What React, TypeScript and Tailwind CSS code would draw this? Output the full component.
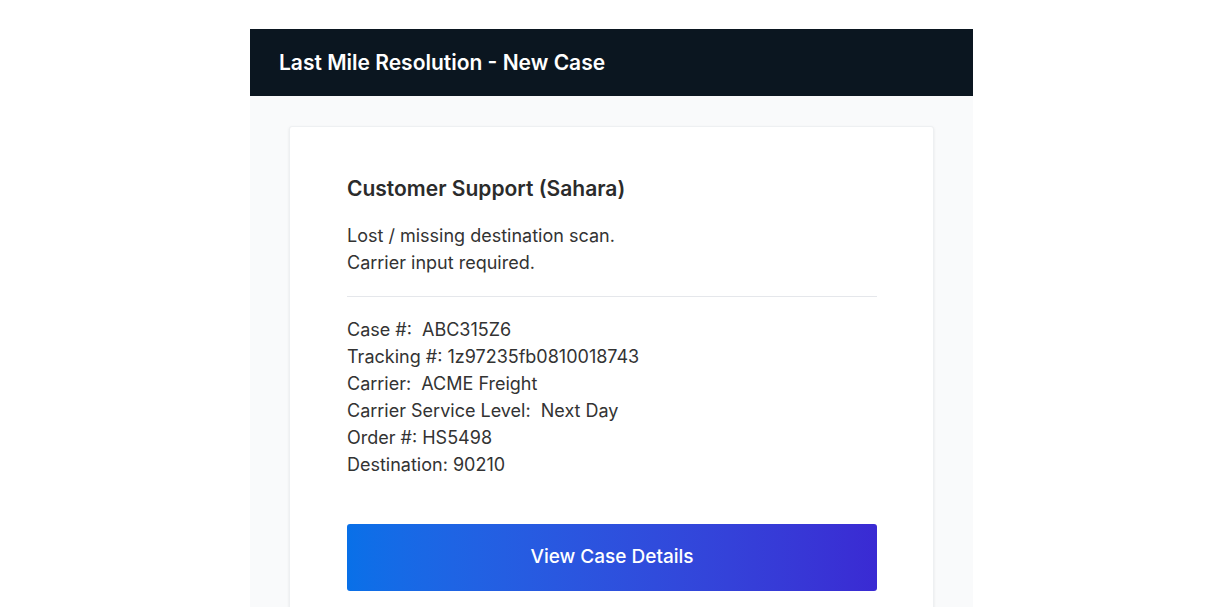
export default function App() {
  const details = [
    'Case #:\u00a0 ABC315Z6',
    'Tracking #: 1z97235fb0810018743',
    'Carrier:\u00a0 ACME Freight',
    'Carrier Service Level:\u00a0 Next Day',
    'Order #: HS5498',
    'Destination: 90210',
  ];

  return (
    <div className="min-h-screen bg-white pt-[29px]" style={{ fontFamily: 'Inter, "Noto Sans", sans-serif' }}>
      <div className="w-[723px] ml-[250px]">
        {/* Header */}
        <div className="h-[67px] bg-[#0b1620] flex items-center px-[29px]">
          <h1 className="text-[21px] font-semibold text-white">
            Last Mile Resolution - New Case
          </h1>
        </div>

        {/* Body */}
        <div className="bg-[#f9fafb] px-[39px] pt-[30px] pb-10">
          <div className="bg-white rounded-[3px] shadow-[0_1px_3px_rgba(0,0,0,0.08)] border border-[#eef0f2] pl-[57px] pr-[56px] pt-[48px] pb-10 text-[#333333]">
            <h2 className="text-[21px] font-semibold leading-[28px] text-[#2b2b2b]">
              Customer Support (Sahara)
            </h2>
            <p className="mt-[19px] text-[18px] leading-[27px]">
              Lost / missing destination scan.
              <br />
              Carrier input required.
            </p>
            <div className="mt-[20px] h-px bg-[#e5e7eb]" />
            <div className="mt-[19px] text-[18px] leading-[27px]">
              {details.map((line) => (
                <div key={line}>{line}</div>
              ))}
            </div>
            <button className="mt-[46px] w-full h-[67px] rounded-[3px] bg-gradient-to-r from-[#0870e8] to-[#3a2ad3] text-white text-[19px] font-medium">
              View Case Details
            </button>
          </div>
        </div>
      </div>
    </div>
  );
}
